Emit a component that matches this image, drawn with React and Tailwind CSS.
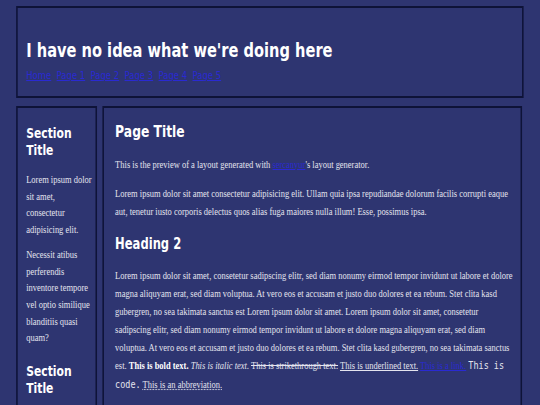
export default function App() {
  const serif = { fontFamily: '"Liberation Serif", "Times New Roman", serif' };
  return (
    <div className="min-h-screen w-full overflow-hidden bg-[#2e3571]">
      <div className="w-[701px] origin-top-left scale-x-[0.77] px-[21px] pt-[6px] text-[#e4e4ee]" style={serif}>
        <header className="h-[92px] border-2 border-[#0e1338] px-[11px] pt-[31px]">
          <h1 className="font-['DejaVu_Sans',sans-serif] text-[19px] font-bold leading-[22px] text-white">
            I have no idea what we're doing here
          </h1>
          <nav className="mt-[8px] flex gap-[7px] font-['DejaVu_Sans',sans-serif] text-[11px] leading-[14px]">
            {['Home', 'Page 1', 'Page 2', 'Page 3', 'Page 4', 'Page 5'].map((l) => (
              <a key={l} href="#" className="text-[#2a2ad2] underline">
                {l}
              </a>
            ))}
          </nav>
        </header>
        <div className="mt-[8px] flex gap-[6.5px]">
          <aside className="w-[105px] shrink-0 border-2 border-[#0e1338] pb-[60px] pl-[11px] pr-[4px] pt-[17px] text-[11px] leading-[16.7px]">
            <h3 className="font-['DejaVu_Sans',sans-serif] text-[14px] font-bold leading-[17px] text-white">
              Section Title
            </h3>
            <p className="mt-[12px]">Lorem ipsum dolor sit amet, consectetur adipisicing elit.</p>
            <p className="mt-[8px]">
              Necessit atibus perferendis inventore tempore vel optio similique blanditiis quasi quam?
            </p>
            <h3 className="mt-[17px] font-['DejaVu_Sans',sans-serif] text-[14px] font-bold leading-[17px] text-white">
              Section Title
            </h3>
          </aside>
          <main className="w-[545px] shrink-0 border-2 border-[#0e1338] pb-[60px] pl-[15px] pr-[8px] pt-[15px] text-[11px] leading-[18px]">
            <h2 className="font-['DejaVu_Sans',sans-serif] text-[16px] font-bold leading-[17px] text-white">
              Page Title
            </h2>
            <p className="mt-[14.5px]">
              This is the preview of a layout generated with{' '}
              <a href="#" className="text-[#2a2ad2] underline">
                sercanyur
              </a>
              's layout generator.
            </p>
            <p className="mt-[11px]">
              Lorem ipsum dolor sit amet consectetur adipisicing elit. Ullam quia ipsa repudiandae dolorum facilis
              corrupti eaque aut, tenetur iusto corporis delectus quos alias fuga maiores nulla illum! Esse, possimus
              ipsa.
            </p>
            <h2 className="mt-[16.5px] font-['DejaVu_Sans',sans-serif] text-[15px] font-bold leading-[17px] text-white">
              Heading 2
            </h2>
            <p className="mt-[12.5px]">
              Lorem ipsum dolor sit amet, consetetur sadipscing elitr, sed diam nonumy eirmod tempor invidunt ut labore
              et dolore magna aliquyam erat, sed diam voluptua. At vero eos et accusam et justo duo dolores et ea
              rebum. Stet clita kasd gubergren, no sea takimata sanctus est Lorem ipsum dolor sit amet. Lorem ipsum
              dolor sit amet, consetetur sadipscing elitr, sed diam nonumy eirmod tempor invidunt ut labore et dolore
              magna aliquyam erat, sed diam voluptua. At vero eos et accusam et justo duo dolores et ea rebum. Stet
              clita kasd gubergren, no sea takimata sanctus est. <strong className="font-bold text-white">This is bold text.</strong>{' '}
              <em className="italic">This is italic text.</em> <del className="line-through">This is strikethrough text.</del>{' '}
              <u className="underline">This is underlined text.</u>{' '}
              <a href="#" className="text-[#2a2ad2] underline">
                This is a link.
              </a>{' '}
              <code className="font-['DejaVu_Sans_Mono',monospace] text-[11px]">This is code.</code>{' '}
              <abbr title="abbreviation" className="underline decoration-dotted">
                This is an abbreviation.
              </abbr>
            </p>
          </main>
        </div>
      </div>
    </div>
  );
}
